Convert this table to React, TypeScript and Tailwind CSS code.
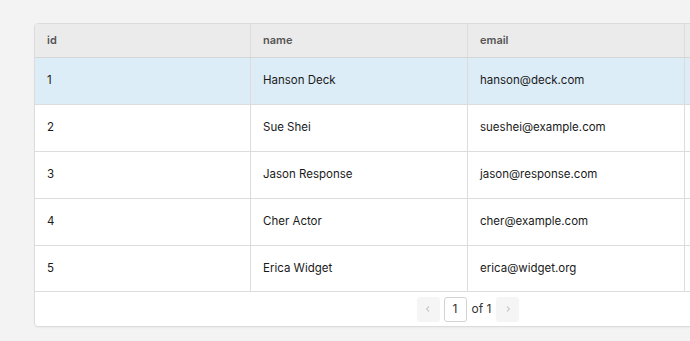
const rows = [
  { id: 1, name: "Hanson Deck", email: "hanson@deck.com" },
  { id: 2, name: "Sue Shei", email: "sueshei@example.com" },
  { id: 3, name: "Jason Response", email: "jason@response.com" },
  { id: 4, name: "Cher Actor", email: "cher@example.com" },
  { id: 5, name: "Erica Widget", email: "erica@widget.org" },
];

const cols = "grid grid-cols-[216px_217px_217px_217px]";

const Chevron = ({ dir }: { dir: "left" | "right" }) => (
  <svg width="8" height="8" viewBox="0 0 8 8" fill="none" stroke="#c9c9c9" strokeWidth="1.1">
    {dir === "left" ? <path d="M5 1.5 2.5 4 5 6.5" /> : <path d="M3 1.5 5.5 4 3 6.5" />}
  </svg>
);

export default function App() {
  return (
    <div className="w-[690px] h-[341px] overflow-hidden bg-[#f3f3f3] pt-[23px] pl-[34px] font-['Inter',sans-serif]">
      <div className="w-[868px] bg-white border border-[#dcdcdc] rounded-[4px] overflow-hidden shadow-[0_1px_2px_rgba(0,0,0,0.04)]">
        <div className={`${cols} h-[34px] bg-[#ebebeb] border-b border-[#d6d6d6]`}>
          {["id", "name", "email", ""].map((h, i) => (
            <div
              key={`head-${i}`}
              className="flex items-center px-3 border-r border-[#dcdcdc] text-[11px] font-semibold text-[#555]"
            >
              {h}
            </div>
          ))}
        </div>
        {rows.map((r, idx) => (
          <div
            key={`row-${idx}`}
            className={`${cols} ${idx === 4 ? "h-[46px]" : "h-[47px]"} border-b border-[#dcdcdc] ${idx === 0 ? "bg-[#ddedf8]" : "bg-white"}`}
          >
            {[String(r.id), r.name, r.email, ""].map((v, i) => (
              <div
                key={`cell-${i}`}
                className="flex items-center px-3 border-r border-[#dcdcdc] text-[11.5px] text-[#1a1a1a]"
              >
                {v}
              </div>
            ))}
          </div>
        ))}
        <div className="h-[34px] flex items-center justify-center gap-1 text-[12px] text-[#333]">
          <button className="w-[23px] h-[25px] rounded-[3px] bg-[#f5f5f5] flex items-center justify-center">
            <Chevron dir="left" />
          </button>
          <div className="w-[23px] h-[25px] rounded-[3px] border border-[#d2d2d2] flex items-center justify-center">
            1
          </div>
          <span className="px-[1px]">of 1</span>
          <button className="w-[23px] h-[25px] rounded-[3px] bg-[#f5f5f5] flex items-center justify-center">
            <Chevron dir="right" />
          </button>
        </div>
      </div>
    </div>
  );
}
